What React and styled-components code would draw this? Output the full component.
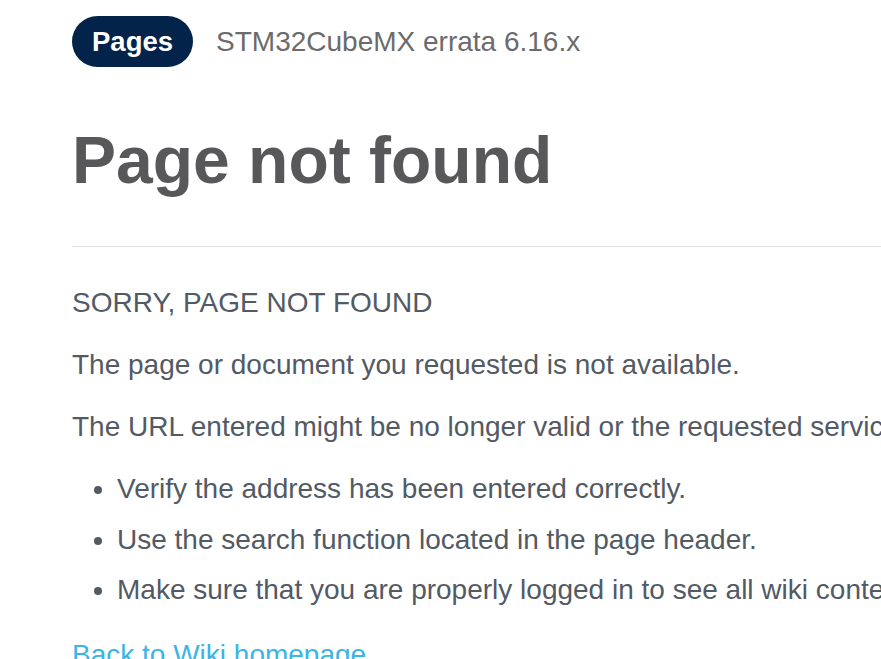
import React from 'react';
import styled, { createGlobalStyle } from 'styled-components';

const palette = {
  navy: '#03234b',
  heading: '#58585a',
  crumb: '#6b6b6b',
  text: '#525a64',
  rule: '#e1e1e1',
  link: '#3cb4e6',
};

const GlobalStyle = createGlobalStyle`
  html, body {
    margin: 0;
    padding: 0;
    background: #ffffff;
    overflow: hidden;
  }
  body {
    font-family: "Liberation Sans", Arial, sans-serif;
  }
`;

const Page = styled.div`
  width: 1200px;
  padding: 16px 0 0 72px;
  box-sizing: border-box;
`;

const Breadcrumb = styled.div`
  display: flex;
  align-items: center;
  gap: 23px;
`;

const Pill = styled.a`
  display: inline-flex;
  align-items: center;
  height: 51px;
  padding: 0 20px;
  border-radius: 26px;
  background: ${palette.navy};
  color: #ffffff;
  font-size: 27.5px;
  font-weight: bold;
  text-decoration: none;
  box-sizing: border-box;
`;

const Crumb = styled.span`
  color: ${palette.crumb};
  font-size: 28px;
`;

const Title = styled.h1`
  margin: 55px 0 0 0;
  color: ${palette.heading};
  font-size: 66px;
  line-height: 76px;
  font-weight: bold;
`;

const Rule = styled.hr`
  margin: 48px 0 0 0;
  border: 0;
  border-top: 1px solid ${palette.rule};
`;

const Body = styled.div`
  padding-top: 31px;
  color: ${palette.text};
  font-size: 28px;
`;

const Para = styled.p`
  margin: 0 0 12px 0;
  line-height: 50px;
  white-space: nowrap;
`;

const List = styled.ul`
  margin: 0 0 12px 0;
  padding-left: 45px;
`;

const Item = styled.li`
  line-height: 50.5px;
  white-space: nowrap;
`;

const BackLink = styled.a`
  display: block;
  margin-top: 14px;
  color: ${palette.link};
  text-decoration: none;
  line-height: 50px;
`;

export default function App() {
  return (
    <>
      <GlobalStyle />
      <Page>
        <Breadcrumb>
          <Pill href="#">Pages</Pill>
          <Crumb>STM32CubeMX errata 6.16.x</Crumb>
        </Breadcrumb>
        <Title>Page not found</Title>
        <Rule />
        <Body>
          <Para>SORRY, PAGE NOT FOUND</Para>
          <Para>The page or document you requested is not available.</Para>
          <Para>
            The URL entered might be no longer valid or the requested service is temporarily unavailable.
          </Para>
          <List>
            <Item>Verify the address has been entered correctly.</Item>
            <Item>Use the search function located in the page header.</Item>
            <Item>Make sure that you are properly logged in to see all wiki content.</Item>
          </List>
          <BackLink href="#">Back to Wiki homepage</BackLink>
        </Body>
      </Page>
    </>
  );
}
